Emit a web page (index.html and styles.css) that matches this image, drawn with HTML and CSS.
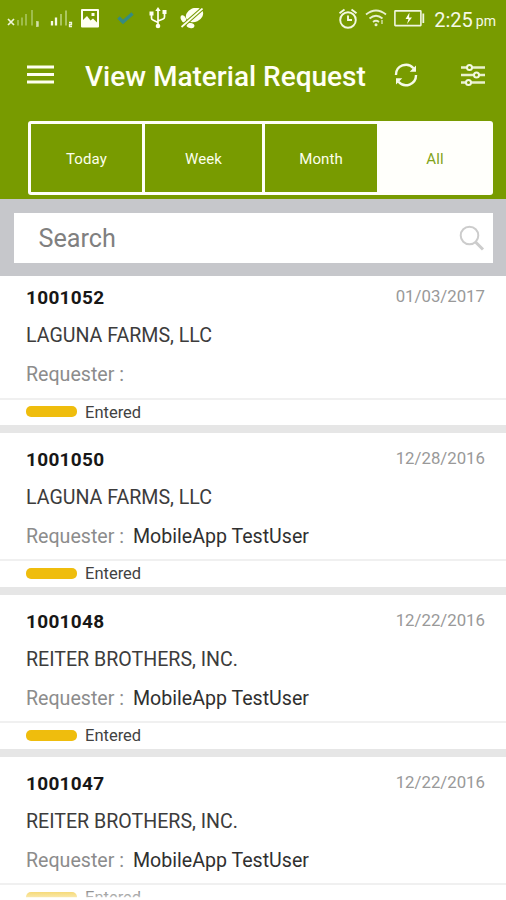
FILE: index.html
```html
<!DOCTYPE html>
<html lang="en">
<head>
<meta charset="utf-8">
<title>View Material Request</title>
<link rel="stylesheet" href="styles.css">
</head>
<body>
<main class="screen">
  <header class="header">
    <div class="status">
      <div class="status-left">
        <svg class="signal" width="33" height="20" viewBox="0 0 33 20"><path d="M1 10l6 6M7 10l-6 6" stroke="#eef5d8" stroke-width="1.700"/><path d="M11 11v5.500M15 8.500v8M19 5v11.500M25 1v15.500" stroke="#9fbd4c" stroke-width="2"/><path d="M29 13h2v4h-2M29 15h2" stroke="#dce8bb" stroke-width="1.300" fill="none"/></svg>
        <svg class="signal-two" width="23" height="20" viewBox="0 0 23 20"><path d="M2 12v4.500M6 8.500v8" stroke="#f4f9e5" stroke-width="2.300"/><path d="M11 5v11.500M16 1.500v15" stroke="#abc660" stroke-width="2"/><path d="M19 13.500h2.500v2h-2v2H22" stroke="#f0f6df" stroke-width="1.300" fill="none"/></svg>
        <svg class="photo" width="18" height="19" viewBox="0 0 18 19"><path fill="#fffff2" fill-rule="evenodd" d="M1 0h16q1 0 1 1v16.500q0 1-1 1H1q-1 0-1-1V1q0-1 1-1zM2 2v9l4-4 3.500 4.500 2.500-2 4 4V2zM10.500 4h3v3h-3z"/></svg>
        <svg class="check" width="17" height="13" viewBox="0 0 17 13"><path d="M1.500 5.500L6 10 15.500 1.500" fill="none" stroke="#368b80" stroke-width="3.400"/></svg>
        <svg class="usb" width="18" height="22" viewBox="0 0 18 22"><g fill="none" stroke="#fffff0" stroke-width="1.700"><path d="M9 3v16M2.500 7v4q0 1.500 1.500 2l5 2.500M15.500 6v4q0 1.500-1.500 2l-5 2"/></g><path d="M6.300 4L9 0l2.700 4zM.5 4.500h4v4h-4zM13.500 3h4v4h-4z" fill="#fffff0"/><circle cx="9" cy="19" r="2.300" fill="#fffff0"/></svg>
        <svg class="muted" width="25" height="22" viewBox="0 0 25 22"><g fill="#fffff0"><ellipse cx="14.500" cy="7" rx="9" ry="6.800" transform="rotate(-25 14.500 7)"/><ellipse cx="3.500" cy="11" rx="2.500" ry="4" transform="rotate(-25 3.500 11)"/><ellipse cx="10.500" cy="17.500" rx="4" ry="2.600" transform="rotate(12 10.500 17.500)"/></g><path d="M1.500 19L22.500 .5" stroke="#789b00" stroke-width="3.800"/><path d="M1.500 19L22.500 .5" stroke="#fffff0" stroke-width="1.700"/></svg>
      </div>
      <div class="status-right">
        <svg class="alarm" width="20" height="21" viewBox="0 0 20 21"><g fill="none" stroke="#f3f8e1" stroke-width="1.900"><circle cx="10" cy="12" r="7.800"/><path d="M10 7.500V12h4M1.500 5.200L6.500 1.500M13.500 1.500l5 3.700"/></g></svg>
        <svg class="wifi" width="22" height="18" viewBox="0 0 22 18"><g fill="none" stroke="#e8f0cf" stroke-width="1.800"><path d="M1 5.500q10-8 20 0M4.500 9.500q6.500-5.500 13 0M8 13q3-2.500 6 0"/><path d="M17 11v4" stroke-width="1.200"/></g><circle cx="11" cy="15.800" r="1.500" fill="#e8f0cf"/></svg>
        <svg class="battery" width="31" height="17" viewBox="0 0 31 17"><rect x=".9" y=".9" width="26" height="14.700" rx=".5" fill="none" stroke="#f0f6df" stroke-width="1.600"/><path d="M29.300 3.500v9.500" stroke="#f0f6df" stroke-width="1.800"/><path d="M15.500 2.500L11.500 9h3l-1.500 5L18 7.500h-3z" fill="#fffff2"/></svg>
        <span class="clock">2:25</span><span class="period">pm</span>
      </div>
    </div>
    <div class="toolbar">
      <svg class="menu" width="27" height="19" viewBox="0 0 27 19"><path d="M0 2h27M0 9.500h27M0 17h27" stroke="#fffff0" stroke-width="3"/></svg>
      <h1 class="title">View Material Request</h1>
      <svg class="refresh" width="24" height="24" viewBox="0 0 24 24"><path d="M2 12A10 10 0 0 1 19.500 5.200M22 12A10 10 0 0 1 4.500 18.800" fill="none" stroke="#f6fae8" stroke-width="2.400"/><path d="M22 2.500v6.300h-6.300zM2 21.500v-6.300h6.300z" fill="#f6fae8"/></svg>
      <svg class="filters" width="24" height="24" viewBox="0 0 24 24"><path d="M0 4.500h24M0 12h24M0 19.500h24" stroke="#e9f1ce" stroke-width="2.700"/><g fill="#789b00" stroke="#f3f8e1" stroke-width="2"><circle cx="8.500" cy="4.500" r="2.500"/><circle cx="15.500" cy="12" r="2.500"/><circle cx="7.500" cy="19.500" r="2.500"/></g></svg>
    </div>
    <nav class="tabs">
      <span class="tab">Today</span><span class="tab">Week</span><span class="tab">Month</span><span class="tab active">All</span>
    </nav>
  </header>
  <section class="search-strip">
    <div class="search">
      <span>Search</span>
      <svg width="26" height="27" viewBox="0 0 26 27"><circle cx="10.500" cy="10.500" r="8.800" fill="none" stroke="#ccc" stroke-width="2"/><path d="M16.500 17l7.500 7.500" stroke="#ccc" stroke-width="3"/></svg>
    </div>
  </section>
  <section class="list">
    <article class="card">
      <div class="top"><b class="number">1001052</b><time class="date">01/03/2017</time></div>
      <div class="company">LAGUNA FARMS, LLC</div>
      <div class="requester"><span class="label">Requester :</span></div>
      <div class="state"><i class="pill"></i><span>Entered</span></div>
    </article>
    <article class="card">
      <div class="top"><b class="number">1001050</b><time class="date">12/28/2016</time></div>
      <div class="company">LAGUNA FARMS, LLC</div>
      <div class="requester"><span class="label">Requester :</span><span class="user">MobileApp TestUser</span></div>
      <div class="state"><i class="pill"></i><span>Entered</span></div>
    </article>
    <article class="card">
      <div class="top"><b class="number">1001048</b><time class="date">12/22/2016</time></div>
      <div class="company">REITER BROTHERS, INC.</div>
      <div class="requester"><span class="label">Requester :</span><span class="user">MobileApp TestUser</span></div>
      <div class="state"><i class="pill"></i><span>Entered</span></div>
    </article>
    <article class="card">
      <div class="top"><b class="number">1001047</b><time class="date">12/22/2016</time></div>
      <div class="company">REITER BROTHERS, INC.</div>
      <div class="requester"><span class="label">Requester :</span><span class="user">MobileApp TestUser</span></div>
      <div class="state"><i class="pill"></i><span>Entered</span></div>
    </article>
  </section>
  <div class="fade"></div>
</main>
</body>
</html>
```
FILE: styles.css
```css
* { box-sizing: border-box; }
body { margin: 0; background: #fff; font-family: Roboto, sans-serif; }
svg { display: block; flex: none; }
.screen { position: relative; width: 506px; height: 900px; overflow: hidden; }
.header { height: 199px; background: #789b00; }
.status { height: 38px; display: flex; justify-content: space-between; }
.status-left, .status-right { display: flex; align-items: flex-start; }
.status-left { padding-left: 7px; }
.signal { margin-top: 9px; }
.signal-two { margin: 9px 0 0 10px; }
.photo { margin: 9px 0 0 8px; }
.check { margin: 12px 0 0 18px; }
.usb { margin: 7px 0 0 15px; }
.muted { margin: 8px 0 0 13px; }
.status-right { padding-right: 10px; color: #f5f9e6; }
.alarm { margin-top: 8px; }
.wifi { margin: 9px 0 0 7px; }
.battery { margin: 10px 0 0 7px; }
.clock { margin: 8px 0 0 9px; font-size: 20px; line-height: 24px; }
.period { margin: 10px 0 0 3px; font-size: 14px; line-height: 22px; }
.toolbar { height: 83px; padding: 0 21px 0 27px; display: flex; align-items: flex-start; }
.menu { margin-top: 27px; }
.title { margin: 22px 0 0 31px; width: 282px; color: #fffff4; font-size: 28px; line-height: 34px; font-weight: 500; white-space: nowrap; }
.refresh { margin: 25px 0 0 27px; }
.filters { margin: 25px 0 0 auto; }
.tabs { width: 465px; height: 74px; margin-left: 28px; padding: 3px; display: grid; grid-template-columns: 111px 117px 112px 1fr; gap: 3px; border-radius: 3px; background: #fffff8; }
.tab { padding-top: 2px; display: flex; align-items: center; justify-content: center; background: #789b00; color: #fcffec; font-size: 15px; letter-spacing: .1px; }
.tab.active { background: #fffffb; color: #82a319; }
.search-strip { height: 77px; padding: 14px 13px 13px 14px; background: #c6c7cb; }
.search { height: 50px; padding: 0 8px 0 24.500px; display: flex; align-items: center; justify-content: space-between; background: #fff; color: #808080; font-size: 25.200px; }
.list { height: 624px; overflow: hidden; }
.card { height: 162.200px; padding-top: 8px; border-bottom: 8px solid #e6e6e6; background: #fff; }
.card:first-child { height: 156.500px; padding-top: 3px; }
.top { height: 38px; padding: 0 21px 0 26px; display: flex; justify-content: space-between; }
.number { color: #171717; font-size: 19px; line-height: 37px; font-weight: 700; letter-spacing: .3px; }
.date { color: #999; font-size: 16.800px; line-height: 34px; }
.company { height: 38px; padding-left: 26px; color: #3c3c3c; font-size: 19.600px; line-height: 38px; white-space: nowrap; }
.requester { height: 42.500px; padding-left: 26px; display: flex; gap: 9px; font-size: 19.600px; line-height: 39.500px; white-space: nowrap; }
.label { color: #8c8c8c; }
.user { color: #303030; }
.state { height: 27px; padding-left: 26px; display: flex; align-items: center; gap: 8px; border-top: 2px solid #f0f0f0; color: #424242; font-size: 16.500px; }
.card:first-child .pill { margin-top: -2px; }
.pill { width: 51px; height: 11px; margin-top: -1px; border-radius: 5px; background: #efbd0d; }
.fade { position: absolute; left: 0; bottom: 0; width: 100%; height: 13px; background: linear-gradient(rgba(255,255,255,.25), rgba(255,255,255,.65) 80%, #fff 81%); }
```
